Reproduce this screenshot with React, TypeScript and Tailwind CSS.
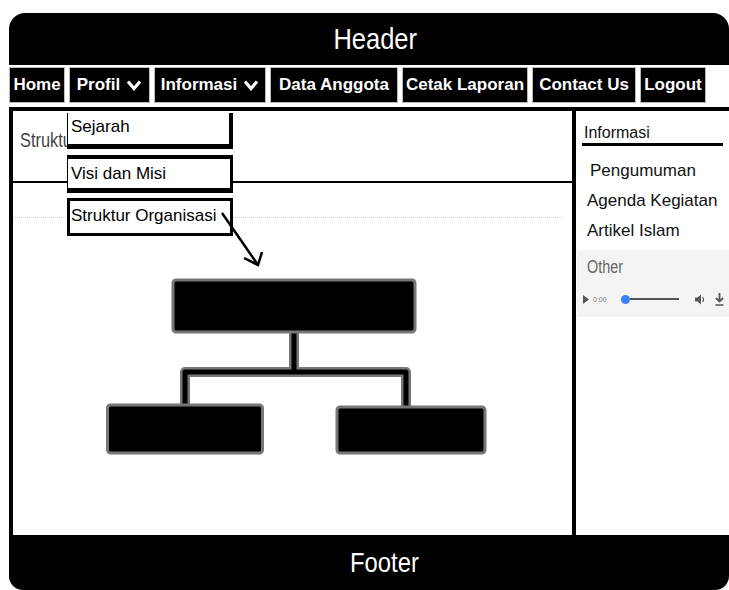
import React from "react";

const navItems = [
  { label: "Home", w: "w-[56px]" },
  { label: "Profil", w: "w-[81px]", caret: true },
  { label: "Informasi", w: "w-[112px]", caret: true },
  { label: "Data Anggota", w: "w-[128px]" },
  { label: "Cetak Laporan", w: "w-[126px]" },
  { label: "Contact Us", w: "w-[104px]" },
  { label: "Logout", w: "w-[66px]" },
];

const sideLinks = [
  { label: "Pengumuman", pl: "pl-[14px]" },
  { label: "Agenda Kegiatan", pl: "pl-[11px]" },
  { label: "Artikel Islam", pl: "pl-[11px]" },
];

function Caret() {
  return (
    <svg width="16" height="12" viewBox="0 0 16 12" className="ml-[6px]">
      <path d="M2 2.5 L8 9.5 L14 2.5" fill="none" stroke="white" strokeWidth="3.2" />
    </svg>
  );
}

function OrgChart() {
  return (
    <svg width="382" height="178" viewBox="0 0 382 178" className="ml-[93px] mt-[60px]">
      <g fill="none" strokeLinejoin="round">
        <path d="M188 54 V94 M79 127 V94 H300 V129" stroke="#777" strokeWidth="10" />
        <path d="M188 54 V94 M79 127 V94 H300 V129" stroke="#000" strokeWidth="5" />
      </g>
      <rect x="67" y="2" width="242" height="52" rx="3" fill="#000" stroke="#777" strokeWidth="3" />
      <rect x="1.5" y="127" width="155" height="48" rx="3" fill="#000" stroke="#777" strokeWidth="3" />
      <rect x="231" y="129" width="148" height="46" rx="3" fill="#000" stroke="#777" strokeWidth="3" />
    </svg>
  );
}

function AudioPlayer() {
  return (
    <div className="flex items-center h-[22px] pl-[6px] pr-[4px] text-[#555]">
      <svg width="6" height="9" viewBox="0 0 6 9">
        <path d="M0 0 L6 4.5 L0 9 Z" fill="#555" />
      </svg>
      <span className="ml-[4px] text-[7px] leading-none text-[#777]">0:00</span>
      <div className="ml-[14px] flex items-center w-[58px]">
        <div className="w-[9px] h-[9px] rounded-full bg-[#3b82f6]" />
        <div className="flex-1 h-[2px] bg-[#555]" />
      </div>
      <svg width="10" height="11" viewBox="0 0 10 11" className="ml-[16px]">
        <path d="M0 3.5 H2.5 L6 0.5 V10.5 L2.5 7.5 H0 Z" fill="#555" />
        <path d="M7.5 3 Q9.5 5.5 7.5 8" fill="none" stroke="#555" strokeWidth="1.2" />
      </svg>
      <svg width="9" height="13" viewBox="0 0 9 13" className="ml-[10px]">
        <path d="M4.5 0 V8 M1 5 L4.5 8.5 L8 5" fill="none" stroke="#555" strokeWidth="1.8" />
        <path d="M0.5 12 H8.5" stroke="#555" strokeWidth="1.5" />
      </svg>
    </div>
  );
}

export default function App() {
  return (
    <div className="bg-white h-[590px] overflow-hidden pl-[9px] pt-[13px] font-['Liberation_Sans',Arial,sans-serif]">
      <div className="w-[720px]">
        <header className="h-[52px] bg-black rounded-t-[16px] flex items-center justify-center pl-[12px] text-white">
          <span className="inline-block text-[30px] leading-none scale-x-[0.85]">Header</span>
        </header>

        <nav className="mt-[2px] h-[36px] flex gap-[4px]">
          {navItems.map((item) => (
            <div
              key={item.label}
              className={`${item.w} h-full bg-black border border-[#bbb] flex items-center justify-center text-white text-[17px] font-bold whitespace-nowrap`}
            >
              {item.label}
              {item.caret && <Caret />}
            </div>
          ))}
        </nav>

        <main className="mt-[4px] h-[428px] border-t-4 border-l-4 border-black flex">
          <section className="relative w-[559px]">
            <div className="h-[72px] border-b-2 border-black pl-[7px] pt-[16px]">
              <h2 className="inline-block origin-left scale-x-[0.78] text-[21px] leading-[26px] text-[#444] whitespace-nowrap">
                Struktur Organisasi
              </h2>
            </div>
            <div className="mt-[34px] mr-[10px] border-t border-dotted border-[#ccc]" />
            <OrgChart />

            {/* dropdown of Profil */}
            <div className="absolute left-[54px] top-[2px] w-[166px] flex flex-col bg-white text-[17px] text-black">
              <div className="h-[36px] bg-white border-l border-r-4 border-b-[5px] border-black pl-[3px] pt-[4px] leading-[20px]">
                Sejarah
              </div>
              <div className="mt-[6px] h-[38px] bg-white border-l border-r-[3px] border-t-4 border-b-[5px] border-black pl-[3px] pt-[5px] leading-[20px]">
                Visi dan Misi
              </div>
              <div className="mt-[5px] h-[38px] bg-white border-[3px] border-black pl-[1px] pt-[5px] leading-[20px] whitespace-nowrap">
                Struktur Organisasi
              </div>
            </div>

            <svg width="60" height="65" viewBox="0 0 60 65" className="absolute left-[197px] top-[94px]">
              <path d="M12 8 L48 60 M52 47 L48 60 L34 53" fill="none" stroke="#000" strokeWidth="2.5" />
            </svg>
          </section>

          <div className="w-[4px] bg-black" />

          <aside className="flex-1 pt-[12px]">
            <div className="mx-[6px] border-b-[3px] border-black pl-[2px] text-[16px] leading-[20px] text-[#111]">
              Informasi
            </div>
            <ul className="mt-[10px] text-[17px] text-[#111]">
              {sideLinks.map((l) => (
                <li key={l.label} className={`${l.pl} h-[30px] leading-[30px] whitespace-nowrap`}>
                  {l.label}
                </li>
              ))}
            </ul>
            <div className="mt-[4px] ml-[1px] h-[67px] bg-[#f4f4f4] pt-[6px]">
              <div className="pl-[10px] text-[18px] leading-[22px] text-[#666]">
                <span className="inline-block origin-left scale-x-[0.8]">Other</span>
              </div>
              <div className="mt-[10px]">
                <AudioPlayer />
              </div>
            </div>
          </aside>
        </main>

        <footer className="h-[55px] bg-black rounded-b-[14px] flex items-center justify-center pl-[30px] text-white">
          <span className="inline-block text-[28px] leading-none scale-x-[0.85]">Footer</span>
        </footer>
      </div>
    </div>
  );
}
